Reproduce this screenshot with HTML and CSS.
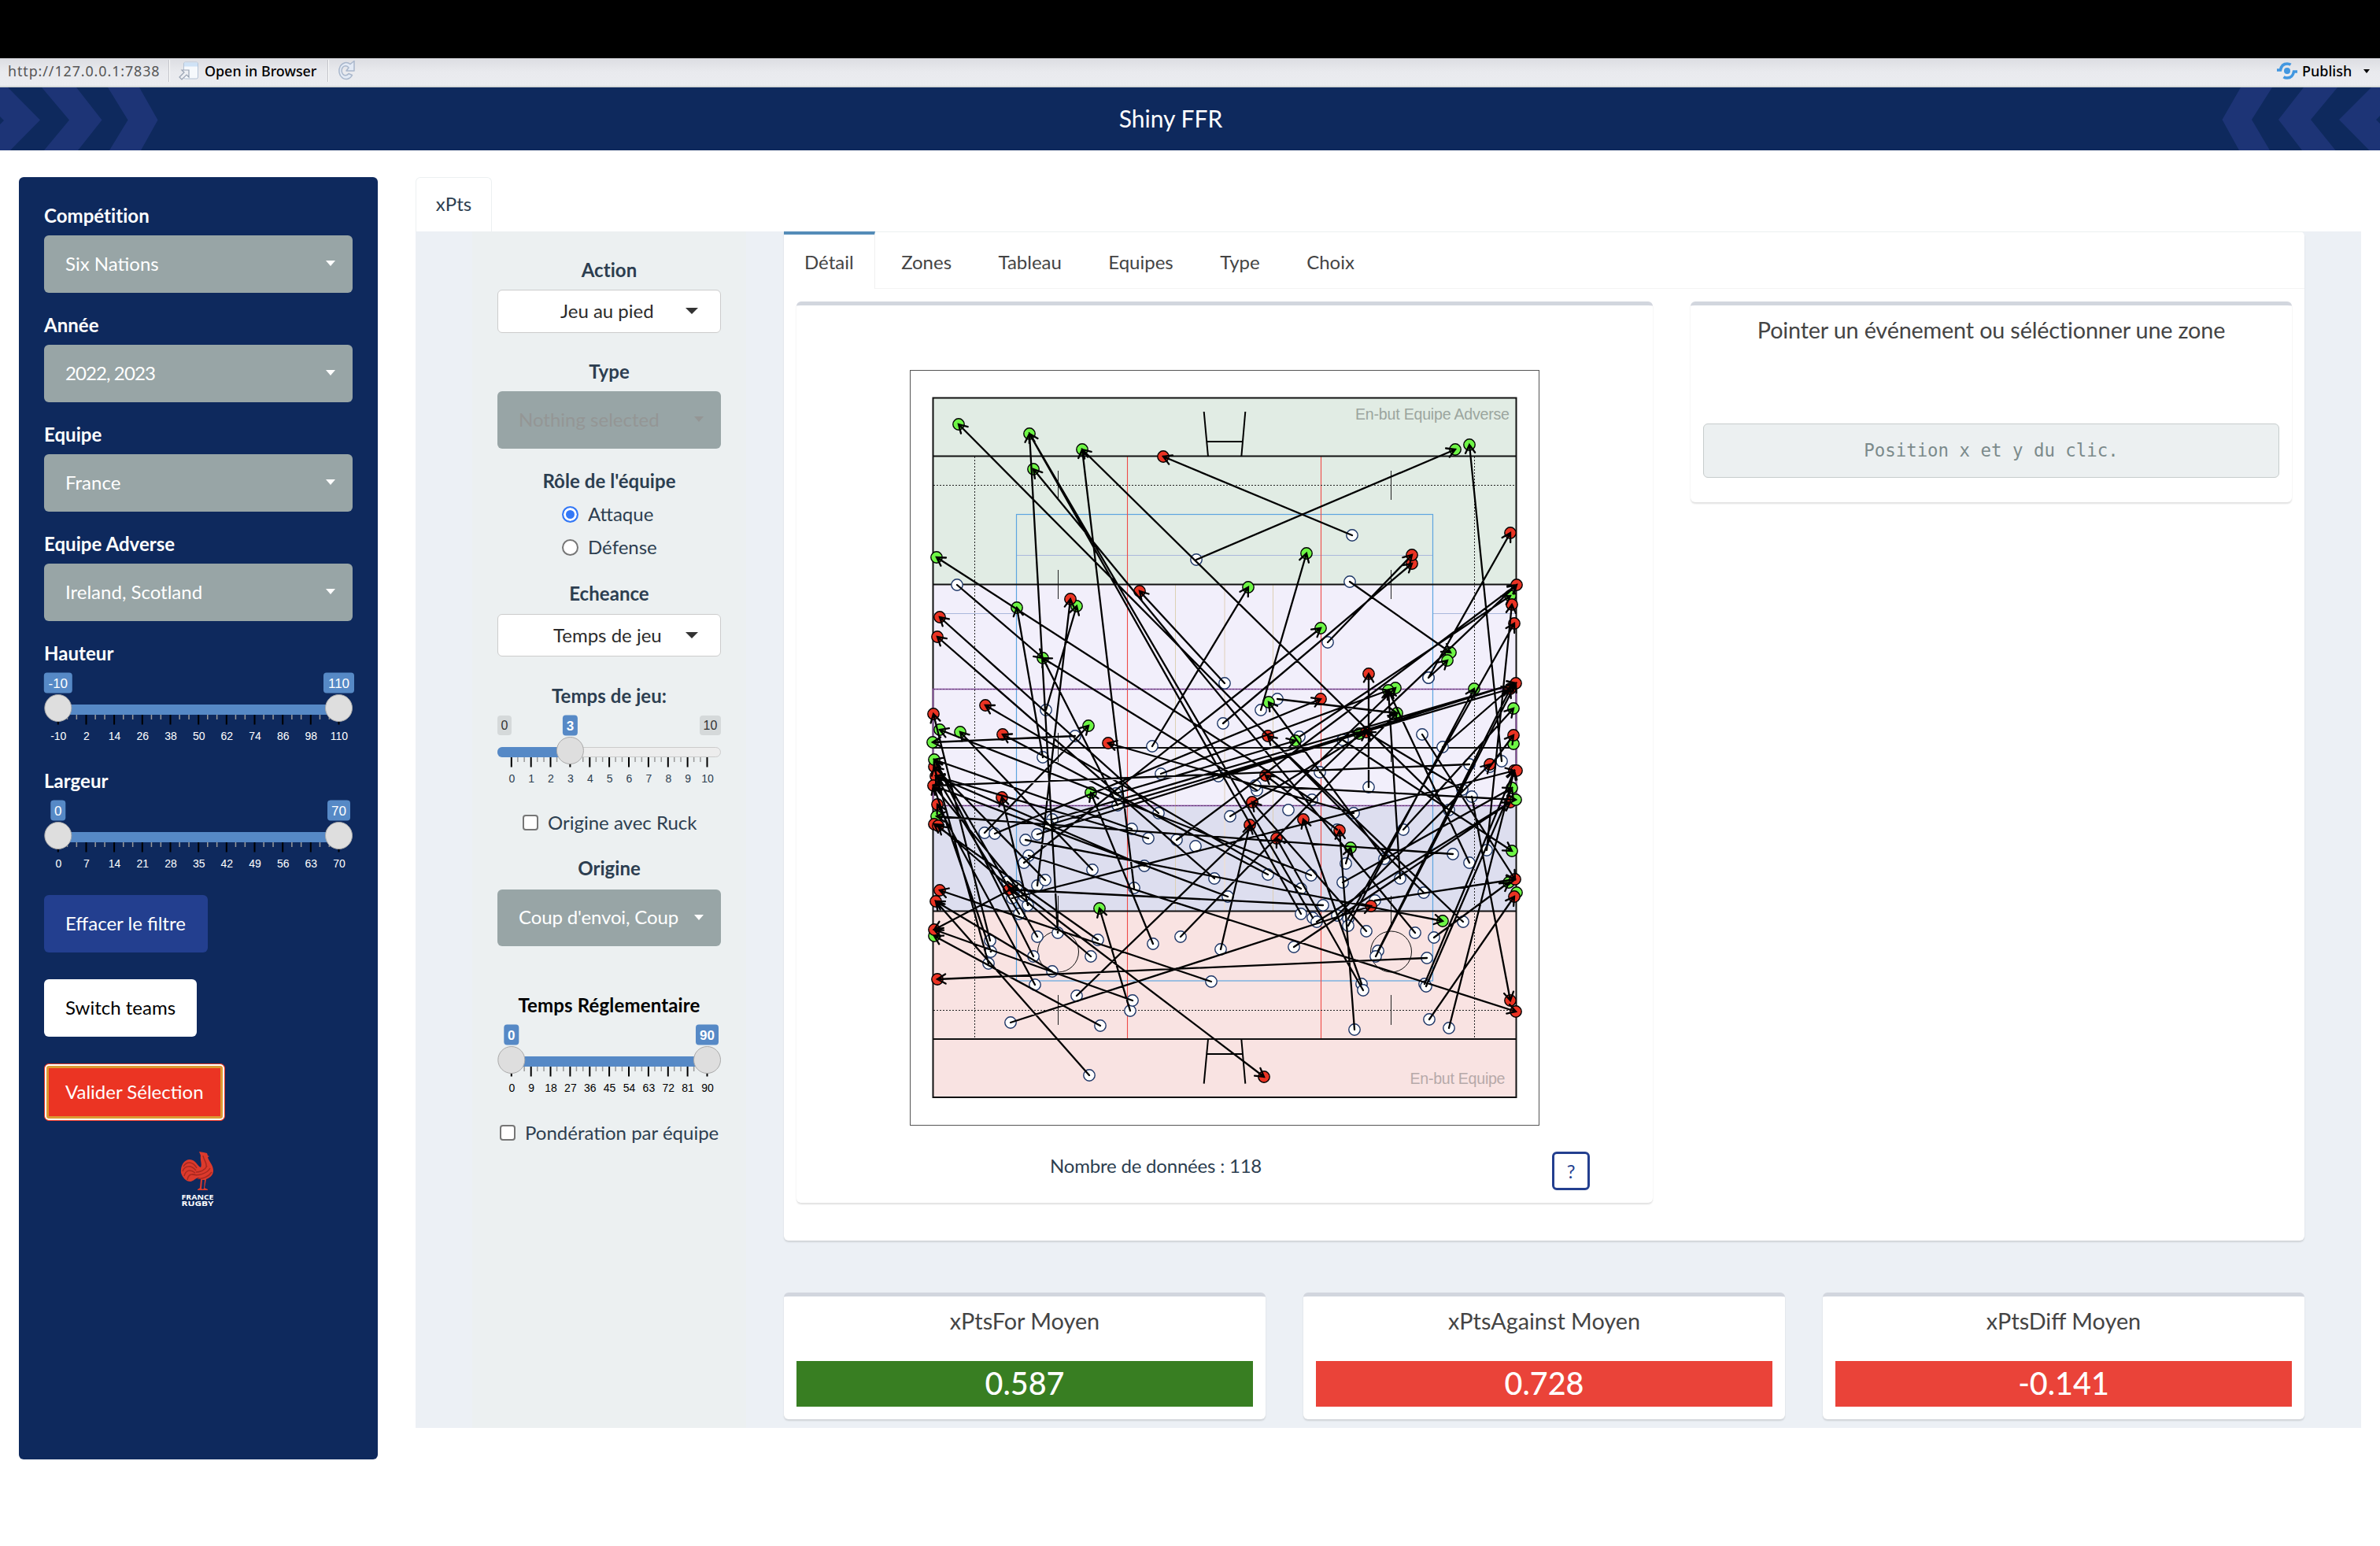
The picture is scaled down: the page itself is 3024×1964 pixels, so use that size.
FILE: index.html
```
<!DOCTYPE html>
<html lang="fr">
<head>
<meta charset="utf-8">
<title>Shiny FFR</title>
<link rel="stylesheet" href="styles.css">
</head>
<body>
<div class="screen-top"></div>
<div class="toolbar">
  <span class="url">http://127.0.0.1:7838</span>
  <span class="sep"></span>
  <svg class="ico-open" width="26" height="24" viewBox="0 0 26 24"><rect x="6.500" y="1" width="18" height="21" rx="2" fill="#f6f9fc" stroke="#b4c3d6"/><rect x="7" y="1.500" width="17" height="5" fill="#cfe2f6"/><path d="M1 20l6-6-3-3h9v9l-3-3-6 6z" fill="#eef0f4" stroke="#98a2b2" stroke-width="1.200"/></svg>
  <span class="open">Open in Browser</span>
  <span class="sep sep2"></span>
  <svg class="ico-reload" width="24" height="28" viewBox="0 0 24 28"><path d="M19.500 19.500A9 10.500 0 1 1 17 5.500L22 1.500V14H12L15 10A5 6 0 1 0 15 17.500z" fill="#e3eaf5" stroke="#a9b7cc" stroke-width="1.500" stroke-linejoin="round"/></svg>
  <span class="grow"></span>
  <svg class="ico-publish" width="26" height="22" viewBox="0 0 26 22"><circle cx="13" cy="11" r="4" fill="#4297e0"/><path d="M0 10h4.500C5.500 4.500 9 2 13 2c2 0 3.500.500 4.500 1.200M26 12h-4.500C20.500 17.500 17 20 13 20c-2 0-3.500-.500-4.500-1.200" fill="none" stroke="#4297e0" stroke-width="3.600"/></svg>
  <span class="publish">Publish</span>
  <span class="caret-pub"></span>
</div>
<header class="banner">
  <svg class="chevrons" width="204" height="80" viewBox="0 0 204 80"><path d="M0 0H10L51 41.500 13 80H0V47L5 42 0 37zM53 0H97L129.500 41.500 99 80H56L88 41.500zM137 0H177L200.500 41.500 179 80H139L162.500 41.500z"/></svg>
  <span class="brand">Shiny FFR</span>
  <svg class="chevrons" width="204" height="80" viewBox="2820 0 204 80"><path d="M2847 0H2887L2861 41 2884 80H2845L2823.500 41zM2927 0H2970L2936 41 2967.500 80H2925L2895 41zM3013 0H3024V36L3019 41 3024 46V80H3010.500L2972 41z"/></svg>
</header>
<div class="page">
  <aside class="sidebar">
    <label class="lbl">Compétition</label>
    <div class="select">Six Nations<i class="caret"></i></div>
    <label class="lbl">Année</label>
    <div class="select years">2022, 2023<i class="caret"></i></div>
    <label class="lbl">Equipe</label>
    <div class="select">France<i class="caret"></i></div>
    <label class="lbl">Equipe Adverse</label>
    <div class="select">Ireland, Scotland<i class="caret"></i></div>
    <label class="lbl">Hauteur</label>
    <svg class="slider" width="392" height="128" data-labels="-10,2,14,26,38,50,62,74,86,98,110" data-badges="-10:36,110:39"></svg>
    <label class="lbl">Largeur</label>
    <svg class="slider" width="392" height="128" data-labels="0,7,14,21,28,35,42,49,56,63,70" data-badges="0:19,70:29"></svg>
    <button class="btn btn-blue">Effacer le filtre</button>
    <button class="btn btn-white">Switch teams</button>
    <button class="btn btn-red">Valider Sélection</button>
    <svg class="logo" width="44" height="72" viewBox="0 0 44 72">
      <path d="M24 1l6 1 4 1 1 3 2 1-2 1c1 5 7 10 7 17 0 6-4 9-9 11l-2 11 4 2v1h-7v-1l2-1 1-11h-3l-1 11 2 1v1h-7v-1l3-2 1-11-3-2c-4 1-7 5-10 5-6 0-10-5-12-11C0 19 5 11 12 11c8 0 10 9 14 10 2-4-1-9 0-15z" fill="#dc3a2c"/>
      <path d="M4 20c4-7 12-7 17 2M3 26c3-8 11-8 17-1M5 32c2-8 8-9 14-4M9 37c1-7 6-9 12-6M15 30c8 2 19-1 23-8M20 27c6 0 12-3 14-8M22 35c6 1 14-2 18-8M29 6c1 6 5 9 4 14" fill="none" stroke="#a8281f" stroke-width="1.500"/>
      <text x="1.500" y="61.500" textLength="41" lengthAdjust="spacingAndGlyphs">FRANCE</text>
      <text x="1.500" y="70" textLength="41" lengthAdjust="spacingAndGlyphs">RUGBY</text>
    </svg>
  </aside>
  <main class="main">
    <nav class="tabs"><a class="tab">xPts</a></nav>
    <div class="content">
      <section class="filters">
        <label class="lbl first">Action</label>
        <div class="native">Jeu au pied<i class="caret dark"></i></div>
        <label class="lbl">Type</label>
        <div class="select disabled">Nothing selected<i class="caret"></i></div>
        <label class="lbl tight">Rôle de l'équipe</label>
        <div class="option"><i class="radio on"></i>Attaque</div>
        <div class="option second"><i class="radio"></i>Défense</div>
        <label class="lbl">Echeance</label>
        <div class="native second">Temps de jeu<i class="caret dark"></i></div>
        <label class="lbl">Temps de jeu:</label>
        <svg class="slider light" width="284" height="127" data-labels="0,1,2,3,4,5,6,7,8,9,10" data-badges="3:19" data-value="0.3"></svg>
        <div class="check"><i class="box-check"></i>Origine avec Ruck</div>
        <label class="lbl">Origine</label>
        <div class="select origin">Coup d'envoi, Coup<i class="caret"></i></div>
        <label class="lbl black">Temps Réglementaire</label>
        <svg class="slider light blacktext" width="284" height="128" data-labels="0,9,18,27,36,45,54,63,72,81,90" data-badges="0:19,90:29"></svg>
        <div class="check wide"><i class="box-check"></i>Pondération par équipe</div>
      </section>
      <div class="results">
        <section class="card">
          <nav class="subtabs"><a class="on">Détail</a><a>Zones</a><a>Tableau</a><a>Equipes</a><a>Type</a><a>Choix</a></nav>
          <div class="panels">
            <div class="box plot-box">
              <svg id="pitch" class="pitch" width="801" height="961" viewBox="1156 470 801 961"></svg>
              <div class="plot-foot"><span class="count">Nombre de données : 118</span><button class="help">?</button></div>
            </div>
            <div class="box info-box">
              <h3>Pointer un événement ou séléctionner une zone</h3>
              <pre>Position x et y du clic.</pre>
            </div>
          </div>
        </section>
        <div class="values">
          <div class="box value"><h3>xPtsFor Moyen</h3><div class="num green">0.587</div></div>
          <div class="box value"><h3>xPtsAgainst Moyen</h3><div class="num">0.728</div></div>
          <div class="box value"><h3>xPtsDiff Moyen</h3><div class="num">-0.141</div></div>
        </div>
      </div>
    </div>
  </main>
</div>
<script src="app.js"></script>
</body>
</html>
```
FILE: styles.css
```
* { box-sizing: border-box; }
body { margin: 0; width: 3024px; height: 1964px; overflow: hidden; background: #fff; font: 24px/34px Lato, "Liberation Sans", sans-serif; color: #2c3e50; }
button { font: inherit; display: block; margin: 0; cursor: pointer; }
h3, pre { margin: 0; font-weight: 400; }

.screen-top { height: 74px; background: #000; }
.toolbar { height: 37px; display: flex; align-items: center; padding: 0 13px 3px 10px; background: linear-gradient(#dcdde2, #e9eaee 50%, #ebecf0); border-bottom: 2px solid #d6dada; font: 500 17.9px/24px "Noto Sans", sans-serif; color: #000; }
.url { width: 204px; color: #555; font-weight: 400; letter-spacing: .9px; }
.sep { width: 2px; height: 28px; background: #c3c4c9; border-right: 1px solid #fff; }
.ico-open { margin: 0 7px 0 11px; }
.open { width: 156px; }
.ico-reload { margin-left: 10px; }
.grow { flex: 1; }
.ico-publish { margin-right: 6px; }
.publish { width: 78px; font-size: 18px; }
.caret-pub { border: 4.5px solid transparent; border-top: 5px solid #000; border-bottom: 0; }

.banner { height: 80px; display: flex; justify-content: space-between; background: #0e295d; }
.chevrons path { fill: #1d3476; }
.brand { font-size: 30px; line-height: 79px; color: #fff; margin-right: 49px; }

.page { display: flex; padding: 34px 24px 0; gap: 48px; }
.sidebar { width: 456px; height: 1629px; padding: 32px; background: #0e295d; border-radius: 6px; display: flex; flex-direction: column; color: #fff; }
.lbl { display: block; font-weight: 700; height: 34px; line-height: 33px; letter-spacing: .05px; }
.select { height: 73px; margin: 8px 0 24px; padding: 0 22px 2px 27px; display: flex; align-items: center; justify-content: space-between; background: #98a5a6; border-radius: 6px; color: #fff; white-space: nowrap; }
.years { letter-spacing: -.9px; }
.caret { border: 6.5px solid transparent; border-top: 7px solid currentColor; border-bottom: 0; }
.btn { height: 73px; padding: 0 28px 2px 27px; border: 0; border-radius: 6px; color: #fff; align-self: flex-start; margin-bottom: 34px; white-space: nowrap; }
.btn-blue { background: #233f8f; }
.btn-white { background: #fff; color: #000; padding-right: 27px; }
.btn-red { background: #eb3423; border: 1px solid #eb3423; box-shadow: inset 0 0 0 2px #fff, inset 0 0 0 5px #dc9a33; padding: 0 26px 2px; }
.logo { align-self: center; margin: 4px 0 0 -3px; }
.logo text { font: 700 8.4px "Open Sans", sans-serif; fill: #fff; }
.slider { display: block; overflow: visible; font-family: "Liberation Sans", sans-serif; }
.slider text { text-anchor: middle; font-size: 14px; fill: #fff; }
.slider .badge { font-size: 17px; fill: #fff; }
.slider.light text { fill: #2c3e50; }
.slider.blacktext text { fill: #000; }
.slider.light .badge { fill: #fff; font-weight: 700; }
.slider.light .edge { fill: #333; font-size: 16px; }

.main { width: 2472px; }
.tabs { height: 69px; display: flex; }
.tab { width: 97px; text-align: center; line-height: 65px; border: 1px solid #ecf0f1; border-bottom: 0; border-radius: 6px 6px 0 0; }
.content { height: 1520px; display: flex; background: #ecf0f5; padding-left: 72px; }
.filters { width: 348px; margin-right: 48px; padding: 31px 32px 0; background: #ecf0f1; text-align: center; }
.first { line-height: 35px; }
.native { height: 55px; margin: 9px 0 32px; padding: 0 28px 1px 79px; display: flex; align-items: center; justify-content: space-between; background: #fff; border: 1px solid #ccc; border-radius: 6px; color: #2b2b2b; }
.native.second { padding-left: 70px; height: 54px; margin-bottom: 33px; }
.caret.dark { border-width: 8px 8px 0; color: #333; }
.disabled { color: #949695; margin: 8px 0 24px; }
.tight { margin-bottom: 8px; line-height: 34px; }
.option { display: flex; align-items: center; padding-left: 82px; height: 34px; }
.option.second { margin: 8px 0 25px; }
.radio { width: 21px; height: 21px; border: 2px solid #767676; border-radius: 50%; background: #fff; margin-right: 12px; }
.radio.on { border-color: #3478f6; box-shadow: inset 0 0 0 3px #fff; background: #3478f6; }
.check { display: flex; align-items: center; padding-left: 32px; height: 34px; margin-bottom: 24px; }
.check.wide { padding-left: 3px; white-space: nowrap; }
.box-check { width: 20px; height: 20px; border: 2px solid #767676; border-radius: 4px; background: #fff; margin-right: 12px; }
.origin { margin: 10px 0 58px; height: 72px; letter-spacing: -.12px; }
.black { color: #000; letter-spacing: .15px; }

.results { width: 1932px; }
.card { height: 1282px; background: #fff; border-radius: 0 6px 6px 6px; box-shadow: 0 2px 2px rgba(0,0,0,.12); }
.subtabs { display: flex; height: 73px; border-top: 1px solid #ecf0f1; border-bottom: 1px solid #f4f4f4; color: #444; }
.subtabs a { padding: 0 25px; margin-right: 9.400px; line-height: 76px; }
.subtabs .on { border-top: 4px solid #548cb8; border-right: 1px solid #f0f0f0; margin-top: -1px; margin-right: 8.500px; line-height: 69px; height: 73px; background: #fff; padding: 0 26px; }
.panels { display: flex; padding: 16px; gap: 48px; align-items: flex-start; }
.box { background: #fff; border-top: 5px solid #d2d6de; border-radius: 6px; box-shadow: 0 2px 2px rgba(0,0,0,.12); text-align: center; color: #444; }
.box h3 { font-size: 28.8px; line-height: 34px; }
.plot-box { width: 1088px; height: 1145px; padding-top: 82px; color: #2c3e50; }
.pitch { display: block; margin-left: 144px; }
.pitch text { font: 19.600px "Liberation Sans", sans-serif; }
.plot-foot { display: flex; padding: 32px 80px 0 322px; justify-content: space-between; }
.count { padding-top: 1px; letter-spacing: -.2px; }
.help { width: 48px; height: 49px; border: 3px solid #233f8f; border-radius: 6px; background: #fff; color: #233f8f; padding: 0; }
.info-box { width: 764px; height: 255px; padding: 14px 16px; }
.info-box h3 { letter-spacing: -.18px; }
.info-box pre { margin-top: 102px; height: 69px; background: #ecf0f1; border: 1.500px solid #c6cccc; border-radius: 6px; font: 22.400px/66px "DejaVu Sans Mono", monospace; color: #7b8a8b; }
.values { display: flex; justify-content: space-between; margin-top: 66px; }
.value { width: 612px; height: 161px; padding: 14px 16px; }
.num { margin-top: 34px; height: 58px; line-height: 56px; font-size: 39.500px; font-weight: 500; color: #fff; background: #ea4339; }
.num.green { background: #387e22; }
```
FILE: app.js
```
var el = function (tag, attrs, text) {
  var s = '<' + tag;
  for (var k in attrs) s += ' ' + k + '="' + attrs[k] + '"';
  return s + '>' + (text === undefined ? '' : text) + '</' + tag + '>';
};

/* range sliders */
document.querySelectorAll('.slider').forEach(function (svg) {
  var w = +svg.getAttribute('width'), a = 17.8, b = w - 17.5, out = '';
  var labels = svg.dataset.labels.split(','), badges = svg.dataset.badges.split(',');
  var value = svg.dataset.value, step = (b - a) / 10, i;
  if (value) {
    out += el('rect', {x: .5, y: 48.5, width: w - 1, height: 12, rx: 6, fill: '#ededed', stroke: '#ccc'});
    out += el('rect', {x: 0, y: 48, width: 40, height: 13, rx: 6, fill: '#5689c6'});
    [['0', 0, 18], ['10', w - 27, 27]].forEach(function (e) {
      out += el('rect', {x: e[1], y: 8, width: e[2], height: 25, rx: 4, fill: '#d5d9da'});
      out += el('text', {'class': 'edge', x: e[1] + e[2] / 2, y: 25.5}, e[0]);
    });
  }
  for (i = 0; i <= 30; i++) {
    var x = a + i * step / 3, major = i % 3 === 0;
    out += el('rect', {x: (x - 1).toFixed(1), y: 61, width: major ? 2 : 1.5, height: major ? 12.5 : 6, fill: major ? '#000' : '#999'});
    if (major) out += el('text', {x: (x + .5).toFixed(1), y: 93}, labels[i / 3]);
  }
  var stops = value ? [a + (b - a) * value] : [a, b];
  out += el('rect', {x: value ? 20 : a, y: 48, width: stops[stops.length - 1] - (value ? 20 : a), height: 13, fill: '#5689c6'});
  stops.forEach(function (x, n) {
    var p = badges[n].split(':');
    out += el('circle', {cx: x, cy: 52.5, r: 17, fill: '#dedede', stroke: '#aaa'});
    out += el('rect', {x: x - p[1] / 2, y: 7.5, width: p[1], height: 26, rx: 4, fill: '#5689c6'});
    out += el('text', {'class': 'badge', x: x, y: 26.8}, p[0]);
  });
  svg.innerHTML = out;
});

/* pitch */
var o = '';
var rect = function (x, y, w, h, fill, stroke, sw) { o += el('rect', {x: x, y: y, width: w, height: h, fill: fill, stroke: stroke || 'none', 'stroke-width': sw || 1}); };
var line = function (x1, y1, x2, y2, c, w, dash) { o += el('line', {x1: x1, y1: y1, x2: x2, y2: y2, stroke: c, 'stroke-width': w || 1, 'stroke-dasharray': dash || 'none'}); };
rect(1156.5, 470.5, 799, 959, '#fff', '#555', 1);
rect(1185.5, 505.5, 741, 237, '#e1ece4');
rect(1185.5, 742.5, 741, 281, '#f2effb');
rect(1185.5, 1023.5, 741, 134, '#dddeef');
rect(1185.5, 1157, 741, 237, '#f9e3e2');
line(1291, 705.5, 1820, 705.5, '#aab8dc');
line(1185, 779.5, 1291, 779.5, '#aab8dc');
line(1820, 779.5, 1926, 779.5, '#aab8dc');
rect(1291.5, 653.5, 529, 592.5, 'none', '#5da5e0', 1.2);
[1493.5, 1617.5].forEach(function (x) { line(x, 742, x, 1157, '#ddd0b4'); });
line(1556, 742, 1556, 1157, '#e9dfdb', 2);
[1432.5, 1678.5].forEach(function (x) { line(x, 579, x, 1320, '#ee4b48', 1.1); });
[616.5, 1283.5].forEach(function (y) { line(1186, y, 1926, y, '#222', 1, '2 2'); });
[1238.5, 1873.5].forEach(function (x) { line(x, 580, x, 1320, '#222', 1, '2 2'); });
[1344.5, 1767.5].forEach(function (x) {
  [[598, 635], [724, 761], [931, 968], [1138, 1176], [1264, 1302]].forEach(function (r) { line(x, r[0], x, r[1], '#222', 1); });
  o += el('circle', {cx: x, cy: 1209, r: 26, fill: 'none', stroke: '#111', 'stroke-width': 1});
});
rect(1185.5, 505.5, 741, 888.5, 'none', '#111', 2);
[579.5, 742.5, 950, 1157.5, 1320].forEach(function (y) { line(1185, y, 1927, y, '#111', 1.8); });
rect(1185.5, 875.5, 741, 148, 'none', '#8a50a0', 1.6);
line(1186, 875.5, 1926, 875.5, '#5a3470', 1, '2 2');
line(1186, 1023.5, 1926, 1023.5, '#5a3470', 1, '2 2');
line(1529.7, 523, 1535, 580, '#000', 2); line(1582.3, 523, 1577.3, 580, '#000', 2); line(1534, 561, 1579, 561, '#000', 2);
line(1535, 1320, 1529.7, 1376.6, '#000', 2); line(1577.3, 1320, 1582.3, 1376.6, '#000', 2); line(1534, 1339, 1579, 1339, '#000', 2);
o += el('text', {x: 1722, y: 532.5, fill: '#9ba59e', textLength: 196}, 'En-but Equipe Adverse');
o += el('text', {x: 1791.5, y: 1377, fill: '#b6a9a9', textLength: 121}, 'En-but Equipe');

/* kicks: start x, start y, end x, end y */
var kicks = [
[1520,711,1849,571],[1718,680,1478,580],[1384,1366,1189,1145],[1721,1308,1702,1055],[1284,1299,1742,1151],
[1556,868,1448,751],[1809,1134,1218,539],[1798,1185,1313,596],[1653,1161,1308,551],[1668,1166,1308,551],
[1344,1185,1308,551],[1730,1250,1656,1041],[1732,1258,1622,1065],[1736,1183,1591,1019],[1699,1054,1608,985],
[1859,1171,1611,935],[1759,1091,1612,892],[1841,1029,1375,571],[1441,1128,1375,571],[1867,1096,1764,877],
[1807,933,1925,1117],[1667,1016,1190,708],[1325,962,1292,772],[1329,902,1368,770],[1318,1125,1360,761],
[1216,743,1325,836],[1597,1004,1325,836],[1420,1023,1325,836],[1472,1033,1194,784],[1543,1116,1191,809],
[1653,1129,1252,896],[1258,1195,1186,907],[1666,1112,1194,927],[1388,1105,1220,930],[1611,1111,1274,933],
[1251,1058,1383,922],[1366,935,1185,943],[1720,1033,1408,944],[1867,971,1186,998],[1438,1053,1187,965],
[1459,1065,1189,986],[1846,1085,1190,1037],[1681,1150,1282,1130],[1539,1247,1194,1131],[1307,1087,1926,1285],
[1303,1067,1833,1170],[1560,1139,1186,998],[1454,1100,1189,986],[1286,1141,1924,979],[1264,1059,1678,888],
[1301,1096,1678,798],[1475,983,1764,877],[1548,986,1926,868],[1337,1041,1926,868],[1332,1048,1919,875],
[1318,1060,1727,932],[1464,948,1586,746],[1687,816,1794,705],[1554,919,1794,716],[1715,739,1843,829],
[1815,861,1919,677],[1815,861,1839,839],[1623,888,1775,906],[1602,902,1660,703],[1651,936,1919,757],
[1495,1067,1927,743],[1563,1037,1736,930],[1889,1080,1921,768],[1713,1167,1924,792],[1833,949,1926,868],
[1713,1176,1873,875],[1783,1054,1923,900],[1908,967,1867,565],[1870,1012,1919,1271],[1739,1000,1739,856],
[1677,981,1927,743],[1779,1116,1764,877],[1858,1003,1736,930],[1706,940,1921,1081],[1418,1008,1646,941],
[1751,1208,1919,875],[1748,1215,1926,868],[1810,1250,1924,979],[1812,1253,1921,1001],[1841,1306,1924,979],
[1893,974,1923,934],[1644,1203,1919,1019],[1673,1171,1919,1019],[1706,1121,1921,1001],[1699,1163,1893,971],
[1595,998,1926,1016],[1747,1144,1925,1117],[1822,1191,1917,1121],[1816,1295,1924,1139],[1813,1217,1191,1244],
[1710,1097,1716,1077],[1500,1190,1775,906],[1368,1265,1773,874],[1551,1206,1588,1048],[1465,1199,1386,1007],
[1436,1284,1397,1154],[1439,1271,1187,1181],[1398,1303,1187,1189],[1337,1234,1189,1145],[1292,1126,1187,1181],
[1280,1120,1606,1368],[1395,1194,1187,1047],[1386,1215,1192,1049],[1328,1118,1187,974],[1306,1150,1273,1013],
[1295,1161,1189,986],[1318,1190,1187,965],[1313,1215,1187,965],[1259,1209,1186,998],[1256,1224,1187,974],
[1315,1251,1191,1022],[1301,1138,1186,998]
];
var still = [[1637, 1029], [1519, 1075]];
var green = [[1218,539],[1308,551],[1375,571],[1313,596],[1190,708],[1292,772],[1368,770],[1325,836],[1194,927],[1220,930],[1383,922],[1185,943],[1187,965],[1386,1007],[1190,1037],[1397,1154],[1187,1189],
[1849,571],[1867,565],[1660,703],[1586,746],[1678,798],[1919,757],[1843,829],[1839,839],[1773,874],[1764,877],[1873,875],[1612,892],[1775,906],[1923,900],[1646,941],[1727,932],[1923,945],[1921,1001],[1926,1016],[1716,1077],[1921,1081],[1917,1121],[1927,1134],[1833,1170]];
var red = [[1478,580],[1448,751],[1360,761],[1194,784],[1191,809],[1252,896],[1186,907],[1274,933],[1408,944],[1187,974],[1189,986],[1186,998],[1273,1013],[1191,1022],[1187,1047],[1192,1049],[1282,1130],[1194,1131],[1189,1145],[1187,1181],[1191,1244],
[1919,677],[1794,716],[1794,705],[1921,768],[1927,743],[1924,792],[1739,856],[1919,875],[1926,868],[1678,888],[1611,935],[1923,934],[1736,930],[1893,971],[1924,979],[1927,979],[1608,985],[1919,1019],[1591,1019],[1588,1048],[1656,1041],[1622,1065],[1702,1055],[1742,1151],[1925,1117],[1924,1139],[1919,1271],[1926,1285],[1606,1368]];
var dot = function (p, fill, stroke) { o += el('circle', {cx: p[0], cy: p[1], r: 7.2, fill: fill, stroke: stroke, 'stroke-width': 1.4}); };
kicks.concat(still).forEach(function (k) { dot(k, '#fff', '#1c3566'); });
var late = {'1187,965': 1, '1926,1016': 1};
var isLate = function (p) { return late[p.join()]; };
green.filter(function (p) { return !isLate(p); }).forEach(function (p) { dot(p, '#6df545', '#000'); });
red.forEach(function (p) { dot(p, '#ea3323', '#000'); });
green.filter(isLate).forEach(function (p) { dot(p, '#6df545', '#000'); });
var d = '';
kicks.forEach(function (k) {
  var t = Math.atan2(k[1] - k[3], k[0] - k[2]), q = function (s) {
    return (k[2] + 12 * Math.cos(t + s)).toFixed(1) + ' ' + (k[3] + 12 * Math.sin(t + s)).toFixed(1);
  };
  d += 'M' + k[0] + ' ' + k[1] + 'L' + k[2] + ' ' + k[3] + 'M' + q(.53) + 'L' + k[2] + ' ' + k[3] + 'L' + q(-.53);
});
o += el('path', {d: d, fill: 'none', stroke: '#000', 'stroke-width': 2.3, 'stroke-linecap': 'round'});
document.getElementById('pitch').innerHTML = o;
```
